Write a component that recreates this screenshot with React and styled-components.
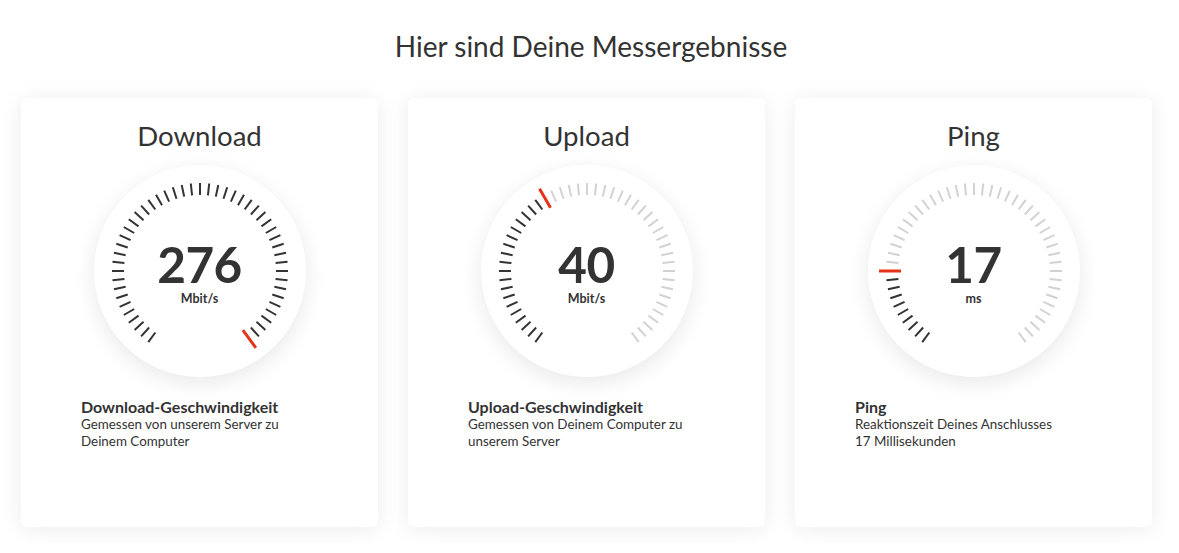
import React from "react";
import styled, { createGlobalStyle } from "styled-components";

const GlobalStyle = createGlobalStyle`
  html, body { margin: 0; padding: 0; background: #ffffff; }
  body {
    font-family: "Lato", "Open Sans", sans-serif;
    color: #333333;
    -webkit-font-smoothing: antialiased;
  }
  * { box-sizing: border-box; }
`;

const Page = styled.main`
  width: 1179px;
  height: 553px;
  padding: 25px 28px 0 21px;
  overflow: hidden;
`;

const Heading = styled.h1`
  margin: 0 0 31px;
  padding-left: 10px;
  text-align: center;
  font-family: "Lato", sans-serif;
  font-weight: 400;
  font-size: 28px;
  line-height: 42px;
  color: #333333;
`;

const CardRow = styled.section`
  display: grid;
  grid-template-columns: repeat(3, 357px);
  column-gap: 30px;
`;

const Card = styled.article`
  height: 429px;
  background: #ffffff;
  border-radius: 6px;
  box-shadow: 0 2px 22px rgba(0, 0, 0, 0.08);
  padding-top: 18px;
  display: flex;
  flex-direction: column;
  align-items: center;
`;

const CardTitle = styled.h2`
  margin: 0;
  font-family: "Lato", sans-serif;
  font-weight: 400;
  font-size: 27.6px;
  line-height: 40px;
  color: #333333;
`;

const Dial = styled.div`
  position: relative;
  margin-top: 9px;
  width: 212px;
  height: 212px;
  border-radius: 50%;
  background: #ffffff;
  box-shadow: 0 6px 22px rgba(0, 0, 0, 0.09);
`;

const DialSvg = styled.svg`
  display: block;
`;

const Reading = styled.div`
  position: absolute;
  inset: 0;
  display: flex;
  flex-direction: column;
  align-items: center;
  padding-top: 74px;
`;

const Value = styled.span`
  font-family: "Lato", sans-serif;
  font-weight: 700;
  font-size: 49.5px;
  line-height: 50px;
  letter-spacing: -0.5px;
  color: #333333;
`;

const Unit = styled.span`
  margin-top: 3px;
  font-family: "Lato", sans-serif;
  font-weight: 700;
  font-size: 12.5px;
  line-height: 14px;
  color: #333333;
`;

const Info = styled.div`
  align-self: stretch;
  padding: 21px 60px 0;
`;

const InfoTitle = styled.h3`
  margin: 0;
  font-family: "Lato", sans-serif;
  font-weight: 700;
  font-size: 16px;
  line-height: 18px;
  color: #333333;
`;

const InfoText = styled.p`
  margin: 0;
  font-family: "Lato", sans-serif;
  font-weight: 400;
  font-size: 13.4px;
  line-height: 17px;
  color: #333333;
`;

const START = -144;
const STEP = 6;
const COUNT = 49;
const C = 106;

function Gauge({ active }) {
  const ticks = [];
  for (let i = 0; i < COUNT; i++) {
    const deg = START + i * STEP;
    const rad = (deg * Math.PI) / 180;
    const sx = Math.sin(rad);
    const sy = -Math.cos(rad);
    const isRed = i === active;
    const r1 = isRed ? 73 : 76;
    const r2 = isRed ? 95 : 88;
    const color = isRed ? "#e53218" : i < active ? "#333333" : "#d2d2d2";
    ticks.push(
      <line
        key={i}
        x1={C + sx * r1}
        y1={C + sy * r1}
        x2={C + sx * r2}
        y2={C + sy * r2}
        stroke={color}
        strokeWidth={isRed ? 3 : 2}
      />
    );
  }
  return (
    <DialSvg width="212" height="212" viewBox="0 0 212 212">
      {ticks}
    </DialSvg>
  );
}

const results = [
  {
    title: "Download",
    value: "276",
    unit: "Mbit/s",
    active: 48,
    infoTitle: "Download-Geschwindigkeit",
    lines: ["Gemessen von unserem Server zu", "Deinem Computer"],
  },
  {
    title: "Upload",
    value: "40",
    unit: "Mbit/s",
    active: 19,
    infoTitle: "Upload-Geschwindigkeit",
    lines: ["Gemessen von Deinem Computer zu", "unserem Server"],
  },
  {
    title: "Ping",
    value: "17",
    unit: "ms",
    active: 9,
    infoTitle: "Ping",
    lines: ["Reaktionszeit Deines Anschlusses", "17 Millisekunden"],
  },
];

export default function App() {
  return (
    <>
      <GlobalStyle />
      <Page>
        <Heading>Hier sind Deine Messergebnisse</Heading>
        <CardRow>
          {results.map((r) => (
            <Card key={r.title}>
              <CardTitle>{r.title}</CardTitle>
              <Dial>
                <Gauge active={r.active} />
                <Reading>
                  <Value>{r.value}</Value>
                  <Unit>{r.unit}</Unit>
                </Reading>
              </Dial>
              <Info>
                <InfoTitle>{r.infoTitle}</InfoTitle>
                <InfoText>
                  {r.lines[0]}
                  <br />
                  {r.lines[1]}
                </InfoText>
              </Info>
            </Card>
          ))}
        </CardRow>
      </Page>
    </>
  );
}
